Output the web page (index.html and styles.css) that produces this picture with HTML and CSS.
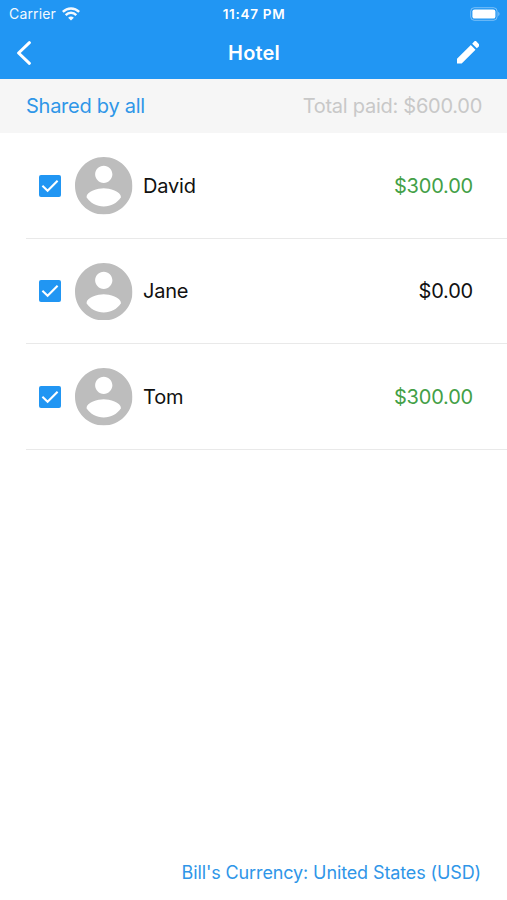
FILE: index.html
```
<!DOCTYPE html>
<html lang="en">
<head>
    <meta charset="UTF-8">
    <meta name="viewport" content="width=device-width, initial-scale=1.0">
    <title>Hotel</title>
    <link rel="stylesheet" href="styles.css">
</head>
<body>
    <svg class="defs" width="0" height="0">
        <symbol id="check" viewBox="0 0 22 22">
            <rect width="22" height="22" rx="2" fill="#2196f3"/>
            <path d="M3.4 10.7 L8.6 15.7 L18.6 5.7" fill="none" stroke="#fff" stroke-width="2.1"/>
        </symbol>
        <symbol id="person" viewBox="2 2 20 20">
            <path fill="#bdbdbd" d="M12 2C6.48 2 2 6.48 2 12s4.48 10 10 10 10-4.48 10-10S17.52 2 12 2zm0 3c1.66 0 3 1.34 3 3s-1.34 3-3 3-3-1.34-3-3 1.34-3 3-3zm0 14.2c-2.5 0-4.71-1.28-6-3.22.03-1.99 4-3.08 6-3.08 1.99 0 5.97 1.09 6 3.08-1.29 1.94-3.5 3.22-6 3.22z"/>
        </symbol>
    </svg>

    <header class="top">
        <div class="status">
            <div class="carrier">
                <span>Carrier</span>
                <svg width="18" height="14" viewBox="0 0 18 14" fill="none" stroke="#fff">
                    <path d="M.8 4.9 C5.4 .2 12.6 .2 17.2 4.9" stroke-width="2.5"/>
                    <path d="M3.7 8.1 C6.7 5 11.3 5 14.3 8.1" stroke-width="2.4"/>
                    <path d="M6.1 10.7 Q9 8.1 11.9 10.7 L9 13.6 Z" fill="#fff" stroke="none"/>
                </svg>
            </div>
            <div class="time">11:47 PM</div>
            <div class="battery">
                <svg width="31" height="14" viewBox="0 0 31 14">
                    <rect x=".7" y=".7" width="26.4" height="12.6" rx="3.6" fill="none" stroke="#fff" stroke-opacity=".4"/>
                    <rect x="2.4" y="2.4" width="23" height="9.2" rx="2.2" fill="#fff"/>
                    <path d="M28.4 4.8 Q30.6 7 28.4 9.2 Z" fill="#fff" fill-opacity=".5"/>
                </svg>
            </div>
        </div>
        <div class="nav">
            <svg class="back" width="16" height="24" viewBox="0 0 16 24">
                <path d="M13.4 1.7 L2.6 12 L13.4 22.3" fill="none" stroke="#fff" stroke-width="3" stroke-linecap="round" stroke-linejoin="round"/>
            </svg>
            <h1>Hotel</h1>
            <svg class="edit" width="22.5" height="22.5" viewBox="3 3 18 18">
                <path fill="#fff" d="M3 17.25V21h3.75L17.81 9.94l-3.75-3.75L3 17.25zM20.71 7.04c.39-.39.39-1.02 0-1.41l-2.34-2.34c-.39-.39-1.02-.39-1.41 0l-1.83 1.83 3.75 3.75 1.83-1.83z"/>
            </svg>
        </div>
    </header>

    <div class="summary">
        <span class="shared">Shared by all</span>
        <span class="total">Total paid: $600.00</span>
    </div>

    <ul class="people">
        <li>
            <svg class="check"><use href="#check"/></svg>
            <svg class="avatar"><use href="#person"/></svg>
            <span class="name">David</span>
            <span class="amount paid">$300.00</span>
        </li>
        <li>
            <svg class="check"><use href="#check"/></svg>
            <svg class="avatar"><use href="#person"/></svg>
            <span class="name">Jane</span>
            <span class="amount">$0.00</span>
        </li>
        <li>
            <svg class="check"><use href="#check"/></svg>
            <svg class="avatar"><use href="#person"/></svg>
            <span class="name">Tom</span>
            <span class="amount paid">$300.00</span>
        </li>
    </ul>

    <footer class="currency">Bill's Currency: United States (USD)</footer>
</body>
</html>
```
FILE: styles.css
```
* { box-sizing: border-box; }

body {
    margin: 0;
    height: 900px;
    display: flex;
    flex-direction: column;
    background: #fff;
    color: #111;
    font-family: Inter, "Liberation Sans", sans-serif;
    font-size: 20px;
    overflow: hidden;
}

svg { display: block; flex: none; }
.defs { display: none; }

/* blue header */
.top { height: 79px; background: #2196f3; color: #fff; }
.status {
    height: 27px;
    padding: 0 6px 0 9px;
    display: grid;
    grid-template-columns: 1fr auto 1fr;
    align-items: center;
    font-size: 14px;
}
.carrier { display: flex; align-items: center; gap: 6px; letter-spacing: .15px; opacity: .95; }
.time { font-size: 13.5px; font-weight: 600; letter-spacing: .7px; margin-right: 2px; }
.battery { display: flex; justify-content: flex-end; }
.nav {
    height: 51px;
    padding: 0 28px 0 16px;
    display: grid;
    grid-template-columns: 1fr auto 1fr;
    align-items: center;
}
.nav h1 { margin: 0 0 0 13px; font-size: 20px; font-weight: 600; letter-spacing: .15px; }
.edit { justify-self: end; }

.summary {
    height: 54px;
    padding: 0 25px 0 26px;
    display: flex;
    align-items: center;
    justify-content: space-between;
    background: #f6f6f6;
    letter-spacing: -.26px;
}
.shared { color: #2f96e8; }
.total { color: #c8c8c8; }

/* people list */
.people { list-style: none; margin: 0 0 0 26px; padding: 0; }
.people li {
    height: 105.5px;
    padding: 1px 34px 0 13px;
    display: flex;
    align-items: center;
    border-bottom: 1.5px solid #e9e9e9;
    letter-spacing: -.2px;
}
.check { width: 22px; height: 22px; }
.avatar { width: 57.5px; height: 57.5px; margin: 0 10.5px 0 14px; }
.name { flex: 1; }
.paid { color: #43a047; }

.currency {
    margin-top: auto;
    padding: 0 26px 16px 0;
    text-align: right;
    font-size: 18px;
    line-height: 22px;
    letter-spacing: -.12px;
    color: #2f96e8;
}
```
